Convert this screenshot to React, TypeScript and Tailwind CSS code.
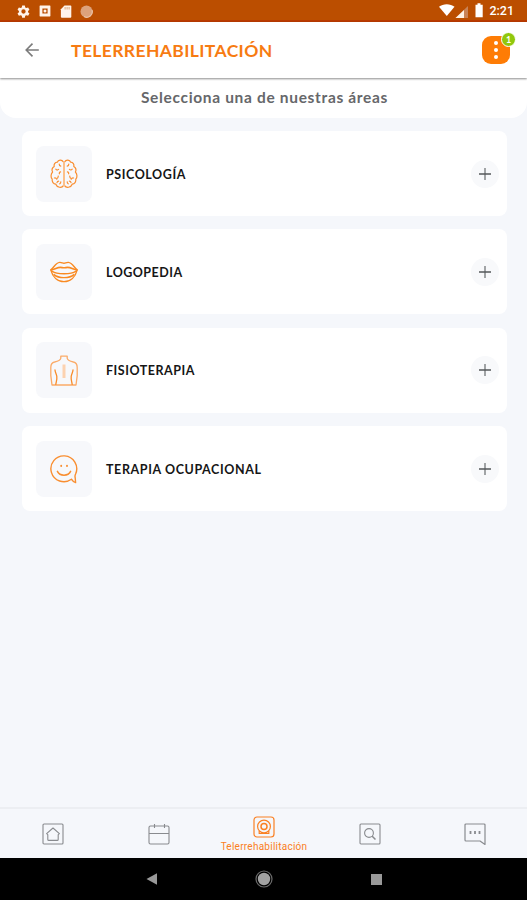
import type { ReactNode } from "react"

function BrainIcon() {
    return (
        <svg viewBox="0 0 28 30" className="h-[30px] w-7" fill="none" stroke="#f98e30" strokeWidth="1.2" strokeLinecap="round" strokeLinejoin="round">
            <path d="M13.4 3C11.8.2 8.2.8 7.3 3.2 4.8 3.2 3.7 5.6 4.2 7.4 2 8.8 1.8 11.4 2.6 13 .6 15.2.6 18.4 2.2 20.2 1.8 22.8 3.4 25 5.8 25.2 7 28.6 11.8 29.4 13.4 26.6" />
            <path d="M14.6 3C16.2.2 19.8.8 20.7 3.2 23.2 3.2 24.3 5.6 23.8 7.4 26 8.8 26.2 11.4 25.4 13 27.4 15.2 27.4 18.4 25.8 20.2 26.2 22.8 24.6 25 22.2 25.2 21 28.6 16.2 29.4 14.6 26.6" />
            <path stroke="#fcc08a" strokeWidth="2" d="M14 3.5v23" />
            <path d="M9.2 5c0 1.4.6 2 1.6 2.2M5.8 10.2c.8 1 1.8 1 2.8.2M10.6 12.8c-1 .2-1.6 1-1.2 2M4.4 19c1.2-.2 2 .2 2.4 1.2M7.6 19c.6-.6.8-1.2.6-2M7 23.6c.2-1 .8-1.4 1.6-1.4M10.8 22.8c0 1-.4 1.6-1 2" />
            <path d="M18.8 5c0 1.4-.6 2-1.6 2.2M22.2 10.2c-.8 1-1.8 1-2.8.2M17.4 12.8c1 .2 1.6 1 1.2 2M23.6 19c-1.2-.2-2 .2-2.4 1.2M20.4 19c-.6-.6-.8-1.2-.6-2M21 23.6c-.2-1-.8-1.4-1.6-1.4M17.2 22.8c0 1 .4 1.6 1 2" />
        </svg>
    )
}

function LipsIcon() {
    return (
        <svg viewBox="0 0 28 22" className="h-[22px] w-7" fill="none" stroke="#f98a22" strokeWidth="1.4" strokeLinecap="round" strokeLinejoin="round">
            <path d="M.8 8.8C4 6.6 5.6 1.8 9.6 1.4c1.8-.2 3 .8 4.4.8s2.6-1 4.4-.8c4 .4 5.600 5.200 8.800 7.400C25.400 16 20.400 20.600 14 20.600S2.600 16 .8 8.800Z" />
            <path strokeWidth="1.6" d="M1.200 9C4.400 8.400 7.400 6.400 10.400 6.400c1.400 0 2.200.4 3.600.4s2.200-.4 3.600-.4c3 0 6 2 9.200 2.600" />
            <path d="M2.200 10.200C5 12.400 9 12.800 14 12.800s9-.4 11.800-2.600" />
            <path d="M4 13.600c3 2.600 6 3 10 3s7-.4 10-3" />
        </svg>
    )
}

function BackIcon() {
    return (
        <svg viewBox="0 0 28 31" className="h-[31px] w-7" fill="none" stroke="#f99a4a" strokeWidth="1.3" strokeLinecap="round" strokeLinejoin="round">
            <path stroke="#fbab68" d="M10.8 1.2h6.400M10.800 1.200v2C10.600 5.400 7.600 6.200 4.600 7 2 7.600.8 9.400.8 12.400v8.200L2 30h24l1.200-9.400v-8.200c0-3-1.200-4.800-3.800-5.400-3-.8-6-1.600-6.200-3.800v-2" />
            <path stroke="#f88c2a" d="M5 15c.2 2.600 1.400 4 1.800 6.400.4 2.800-.6 5.200-1 8M23 15c-.2 2.600-1.400 4-1.800 6.400-.4 2.800.6 5.200 1 8" />
            <path stroke="#fcd2b0" strokeWidth="3" strokeLinecap="butt" d="M14 9.500v13.500" />
        </svg>
    )
}

function SmileIcon() {
    return (
        <svg viewBox="0 0 28 30" className="h-[30px] w-7" fill="none" stroke="#f98e30" strokeWidth="1.4" strokeLinecap="round" strokeLinejoin="round">
            <path d="M21.4 25.2A12.9 12.9 0 1 1 25.600 20c-.8 1.600-.8 2.400-.4 3.800l.4 4.800c-1.800-.4-3-1.400-4.200-3.400Z" />
            <path strokeWidth="1.5" d="M7.400 17.400c2.400 5 10.800 5 13.200 0" />
            <path strokeWidth="1.9" d="M11.200 11.800v.2M17 11.800v.2" />
        </svg>
    )
}

const areas: { name: string; icon: ReactNode; tracking: string }[] = [
    { name: "PSICOLOGÍA", icon: <BrainIcon />, tracking: "tracking-[0.57px]" },
    { name: "LOGOPEDIA", icon: <LipsIcon />, tracking: "tracking-[0.48px]" },
    { name: "FISIOTERAPIA", icon: <BackIcon />, tracking: "tracking-[0.52px]" },
    { name: "TERAPIA OCUPACIONAL", icon: <SmileIcon />, tracking: "tracking-[0.6px]" },
]

function StatusBar() {
    return (
        <div className="flex h-[22px] shrink-0 items-center justify-between border-b-2 border-[#b93a00] bg-[#bb4e00] pr-[13px] pl-[17px] text-white">
            <div className="flex items-center gap-[9px] pt-0.5">
                <svg viewBox="0 0 24 24" className="size-[13px]" fill="#fff4ea" fillRule="evenodd">
                    <path d="M9.5 1h5l.7 3.4 2 1.2 3.3-1.1 2.5 4.3-2.6 2.3v2.2l2.6 2.3-2.5 4.3-3.3-1.1-2 1.2-.7 3.4h-5l-.7-3.4-2-1.2-3.3 1.1L1 15.6l2.6-2.3v-2.2L1 8.8l2.5-4.3 3.3 1.1 2-1.2ZM12 8a4 4 0 1 0 0 8 4 4 0 0 0 0-8Z" />
                </svg>
                <svg viewBox="0 0 12 12" className="size-3" fill="#fff4ea" fillRule="evenodd">
                    <path d="M1 .6h10l.4.4v10l-.4.4H1l-.4-.4V1ZM3.4 3.4v5.200h5.200V3.400Z" />
                    <circle cx="6" cy="6" r="1.5" />
                </svg>
                <svg viewBox="0 0 12 13" className="h-[13px] w-3" fill="#fff4ea">
                    <path d="M4.5.5h6.2l.6.6v11l-.6.6H1.5l-.6-.6V4.200Z" />
                    <path fill="#dba57c" d="M4.600 2h1v2.400h-1zM6.600 2h1v2.400h-1zM8.600 2h1v2.400h-1z" />
                </svg>
                <svg viewBox="0 0 13 13" className="-ml-px size-[13px]">
                    <circle cx="6.5" cy="6.5" r="6" fill="#dda27b" />
                    <path d="M4 11.500A5.500 5.500 0 0 0 12 5" fill="none" stroke="#eac4a8" strokeWidth="1.2" />
                </svg>
            </div>
            <div className="flex items-center">
                <svg viewBox="0 0 46 16" className="h-4 w-[46px]">
                    <path fill="#fff" d="M0 4.800C4 1.300 11.500 1.300 15.500 4.800L7.800 14Z" />
                    <path fill="#c98357" d="M29 4v12H16.500Z" />
                    <path fill="#fff2e6" d="M25 8v8h-8.500Z" />
                    <path fill="#fff" d="M38.500 1.200h3v1.500h2.200v12.600h-7.200V2.700h2Z" />
                </svg>
                <span className="ml-1 pt-0.5 text-[12.5px] leading-4 font-medium [font-family:Roboto,sans-serif]">2:21</span>
            </div>
        </div>
    )
}

function Header() {
    return (
        <header className="z-10 flex h-[56px] shrink-0 items-center bg-white pr-[17px] pl-[25px] shadow-[0_1px_2px_rgba(0,0,0,0.45)]">
            <svg viewBox="0 0 14 14" className="size-3.5" fill="none" stroke="#7b7b7b" strokeWidth="1.6">
                <path d="M7.5.6 1.200 7l6.300 6.400M1.200 7h12.600" />
            </svg>
            <h1 className="ml-8 pt-px text-[17.5px] leading-6 font-bold tracking-[0.38px] text-[#f77b12]">TELERREHABILITACIÓN</h1>
            <div className="relative ml-auto flex size-7 flex-col items-center justify-center gap-[3px] rounded-[9px] bg-[#fe7c05]">
                <i className="size-1 rounded-full bg-white" />
                <i className="size-1 rounded-full bg-white" />
                <i className="size-1 rounded-full bg-white" />
                <span className="absolute -top-[4px] -right-[6px] flex size-[15px] items-center justify-center rounded-full border border-white bg-[#91c80c] text-[9px] font-bold text-white">
                    1
                </span>
            </div>
        </header>
    )
}

function TabBar() {
    return (
        <nav className="grid h-[51px] shrink-0 grid-cols-5 border-t-2 border-[#eceef2] bg-[#f5f7fb] pl-px text-[#898b8f]">
            <div className="flex justify-center pt-[14px] pr-0.5">
                <svg viewBox="0 0 22 22" className="size-[22px]" fill="none" stroke="currentColor" strokeWidth="1.1" strokeLinejoin="round">
                    <rect x="1" y="1" width="20" height="20" rx="1" />
                    <path d="M11 5 4.6 10.6l1.2 1v4.800q0 1 1 1h8.400q1 0 1-1v-4.800l1.200-1Z" />
                </svg>
            </div>
            <div className="flex justify-center pt-[14px]">
                <svg viewBox="0 0 22 22" className="size-[22px]" fill="none" stroke="currentColor" strokeWidth="1.1">
                    <rect x="1" y="3" width="20" height="18" rx="1.5" />
                    <path d="M1 10.500h20M6.500 1v4M16.500 1v4" />
                </svg>
            </div>
            <div className="flex flex-col items-center pt-[7px] text-[#fa8023]">
                <svg viewBox="0 0 22 22" className="size-[22px] shrink-0" fill="none" stroke="currentColor" strokeWidth="1.2">
                    <rect x="1" y="1" width="20" height="20" rx="3" />
                    <circle cx="11" cy="10.5" r="6.4" />
                    <circle cx="11" cy="10.5" r="3" strokeWidth="1.5" />
                    <path d="M6.200 15v2.500h9.600V15" />
                </svg>
                <span className="mt-[3px] text-[10px] leading-3 tracking-[0.25px] whitespace-nowrap [font-family:Roboto,sans-serif]">Telerrehabilitación</span>
            </div>
            <div className="flex justify-center pt-[14px] pl-px">
                <svg viewBox="0 0 22 22" className="size-[22px]" fill="none" stroke="currentColor" strokeWidth="1.1">
                    <rect x="1" y="1" width="20" height="20" rx="1" />
                    <circle cx="10" cy="10" r="4.4" />
                    <path d="m13 13 3.500 3.500" strokeWidth="1.5" />
                </svg>
            </div>
            <div className="flex justify-center pt-[14px] pl-0.5">
                <svg viewBox="0 0 22 22" className="size-[22px]" fill="none" stroke="currentColor" strokeWidth="1.2" strokeLinejoin="round">
                    <path d="M21 21.400V2q0-1-1-1H2Q1 1 1 2v15q0 1 1 1h14Z" />
                    <path d="M6.500 8v3M11 8v3M15.500 8v3" strokeWidth="1.8" />
                </svg>
            </div>
        </nav>
    )
}

export default function App() {
    return (
        <div className="flex h-[900px] w-[527px] flex-col overflow-hidden bg-[#f5f7fb] [font-family:Lato,sans-serif]">
            <StatusBar />
            <Header />

            <div className="flex h-10 shrink-0 justify-center rounded-b-[16px] bg-white pt-[9px] pl-0.5">
                <h2 className="text-[15.5px] leading-5 font-bold tracking-[0.67px] text-[#66676a]">Selecciona una de nuestras áreas</h2>
            </div>

            <main className="flex flex-1 flex-col gap-[13.4px] pt-[13px] pr-5 pl-[22px]">
                {areas.map((area) => (
                    <div key={area.name} className="flex h-[85px] items-center rounded-lg bg-white pr-2 pl-3.5">
                        <div className="flex size-14 items-center justify-center rounded-lg bg-[#f7f8fb]">{area.icon}</div>
                        <span className={`ml-3.5 pt-0.5 text-[12.5px] leading-5 font-bold text-[#161616] ${area.tracking}`}>{area.name}</span>
                        <div className="ml-auto flex size-7 items-center justify-center rounded-full bg-[#f8f9fb]">
                            <svg viewBox="0 0 12 12" className="size-3" fill="none" stroke="#55575a" strokeWidth="1.5">
                                <path stroke="#85878a" d="M6 0v12" />
                                <path d="M0 6h12" />
                            </svg>
                        </div>
                    </div>
                ))}
            </main>

            <TabBar />

            <div className="flex h-[42px] shrink-0 items-center justify-between bg-black pr-[145px] pl-[146px]">
                <svg viewBox="0 0 12 12" className="size-3">
                    <path fill="#999" d="M.5 6 11 .3v11.400Z" />
                </svg>
                <svg viewBox="0 0 18 18" className="-ml-0.5 size-[18px]">
                    <circle cx="9" cy="9" r="8" fill="none" stroke="#6b6b6b" strokeWidth="1.2" />
                    <circle cx="9" cy="9" r="6.2" fill="#a2a2a2" />
                </svg>
                <div className="size-[11px] bg-[#999]" />
            </div>
        </div>
    )
}
